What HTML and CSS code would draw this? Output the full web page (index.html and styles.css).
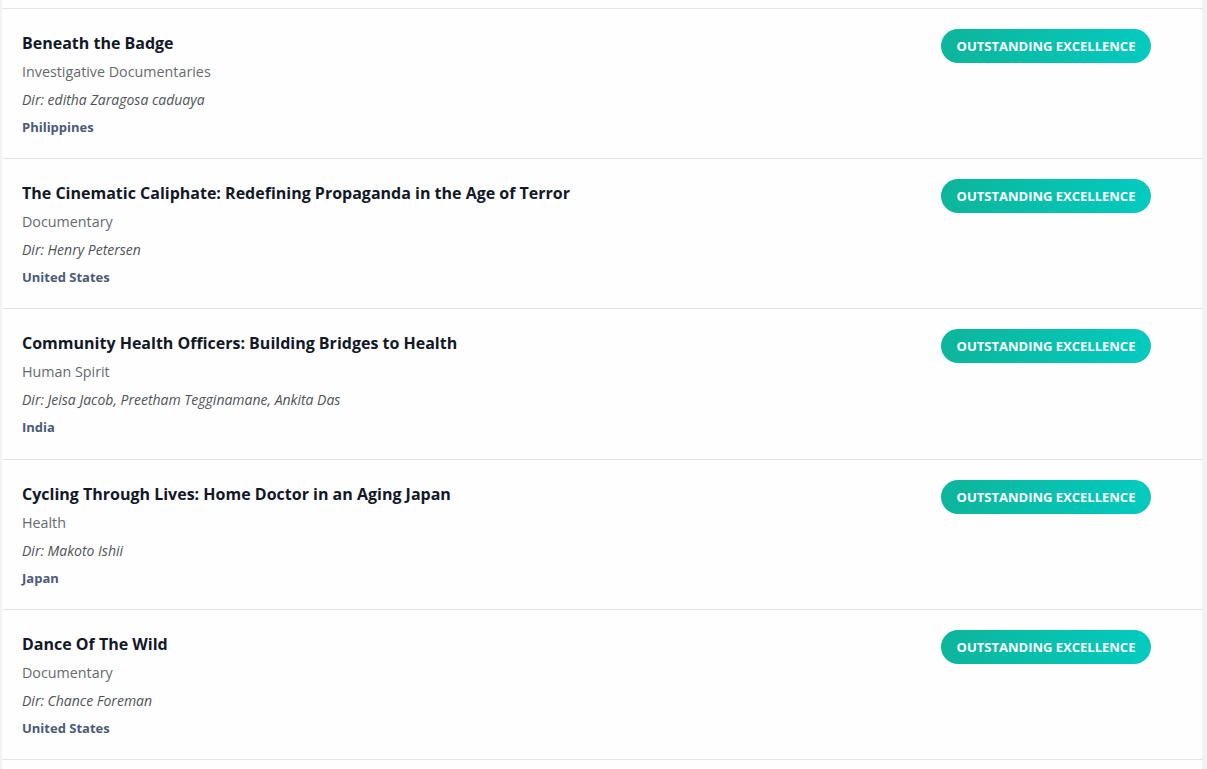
FILE: index.html
```html
<!DOCTYPE html>
<html lang="en">
<head>
<meta charset="utf-8">
<title>Awards</title>
<link rel="stylesheet" href="styles.css">
</head>
<body>
<div class="list">
  <div class="row-tail"></div>
  <div class="row">
    <div class="info">
      <div class="title">Beneath the Badge</div>
      <div class="genre">Investigative Documentaries</div>
      <div class="dir">Dir: editha Zaragosa caduaya</div>
      <div class="country">Philippines</div>
    </div>
    <span class="badge">OUTSTANDING EXCELLENCE</span>
  </div>
  <div class="row">
    <div class="info">
      <div class="title">The Cinematic Caliphate: Redefining Propaganda in the Age of Terror</div>
      <div class="genre">Documentary</div>
      <div class="dir">Dir: Henry Petersen</div>
      <div class="country">United States</div>
    </div>
    <span class="badge">OUTSTANDING EXCELLENCE</span>
  </div>
  <div class="row">
    <div class="info">
      <div class="title">Community Health Officers: Building Bridges to Health</div>
      <div class="genre">Human Spirit</div>
      <div class="dir">Dir: Jeisa Jacob, Preetham Tegginamane, Ankita Das</div>
      <div class="country">India</div>
    </div>
    <span class="badge">OUTSTANDING EXCELLENCE</span>
  </div>
  <div class="row">
    <div class="info">
      <div class="title">Cycling Through Lives: Home Doctor in an Aging Japan</div>
      <div class="genre">Health</div>
      <div class="dir">Dir: Makoto Ishii</div>
      <div class="country">Japan</div>
    </div>
    <span class="badge">OUTSTANDING EXCELLENCE</span>
  </div>
  <div class="row">
    <div class="info">
      <div class="title">Dance Of The Wild</div>
      <div class="genre">Documentary</div>
      <div class="dir">Dir: Chance Foreman</div>
      <div class="country">United States</div>
    </div>
    <span class="badge">OUTSTANDING EXCELLENCE</span>
  </div>
  <div class="row-head"></div>
</div>
</body>
</html>
```
FILE: styles.css
```css
html, body {
  margin: 0;
  padding: 0;
}
body {
  background: #f1f2f4;
  font-family: "Open Sans", "Noto Sans", sans-serif;
  height: 769px;
  overflow: hidden;
}
.list {
  margin-left: 2px;
  width: 1200px;
  background: #fefefe;
}
.row-tail {
  height: 8px;
  border-bottom: 1px solid #e3e4e6;
}
.row-head {
  height: 9px;
}
.row {
  display: flex;
  justify-content: space-between;
  align-items: flex-start;
  padding: 20px 51px 20px 20px;
  height: 109.2px;
  border-bottom: 1px solid #e3e4e6;
}
.title {
  font-size: 16px;
  font-weight: 700;
  line-height: 28px;
  color: #111827;
}
.genre {
  margin-top: 1px;
  font-size: 14.3px;
  line-height: 28px;
  color: #666a70;
}
.dir {
  font-size: 14px;
  font-style: italic;
  line-height: 28px;
  color: #4f5359;
}
.country {
  font-size: 13px;
  font-weight: 700;
  line-height: 26px;
  color: #4a5b78;
}
.badge {
  display: inline-block;
  height: 34px;
  line-height: 34px;
  padding: 0 15px;
  width: 180px;
  text-align: center;
  border-radius: 17px;
  background: linear-gradient(90deg, #0db59b, #03cbbf);
  color: #ffffff;
  font-size: 13px;
  font-weight: 700;
  white-space: nowrap;
}
```
